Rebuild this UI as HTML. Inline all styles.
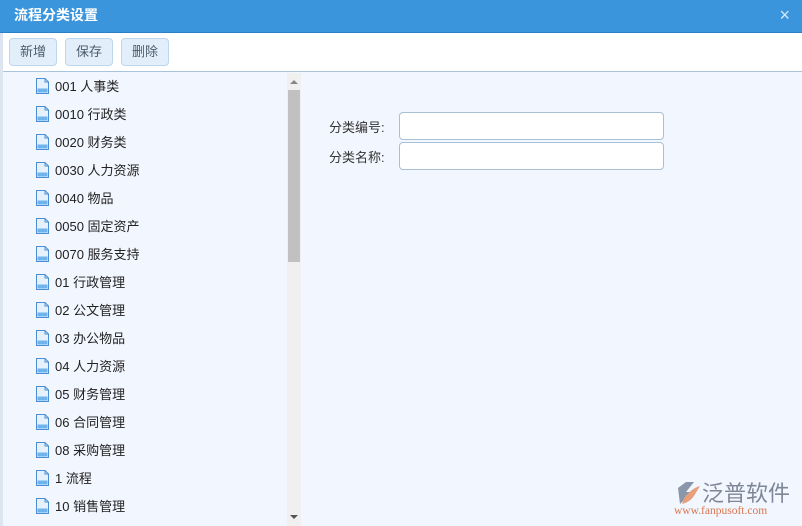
<!DOCTYPE html>
<html><head><meta charset="utf-8"><style>
*{margin:0;padding:0;box-sizing:border-box}
body{width:802px;height:526px;overflow:hidden;background:#f2f6fe;font-family:"Liberation Sans","Noto Sans CJK SC",sans-serif;position:relative}
.hd{position:absolute;left:0;top:0;width:802px;height:33px;background:#3b95dc;border-bottom:1px solid #2a7fc6;color:#fff;font-weight:bold;font-size:14px;line-height:30px;padding-left:14px}
.x{position:absolute;right:12px;top:0;color:#d8e9f8;font-size:18px;font-weight:normal}
.tb{position:absolute;left:3px;top:33px;width:799px;height:39px;background:#fff;border-bottom:1px solid #a8c4dc}
.btn{position:absolute;top:5px;height:28px;width:48px;border:1px solid #bcd6ee;border-radius:4px;background:#e2effb;color:#4d5b6a;font-size:13px;text-align:center;line-height:26px}
.lb{position:absolute;left:0;top:33px;width:3px;height:493px;background:#dde6f0}
.item{position:absolute;left:36px;font-size:13px;color:#222;height:20px;line-height:20px}
.ic{display:inline-block;width:13px;height:16px;vertical-align:-3px;margin-right:6px}
.sb{position:absolute;left:287px;top:73px;width:14px;height:453px;background:#f0f0f0}
.th{position:absolute;left:288px;top:90px;width:12px;height:172px;background:#c1c1c1}
.lab{position:absolute;left:329px;font-size:13px;color:#333}
.in{position:absolute;left:399px;width:265px;height:28px;background:#fff;border:1px solid #a9bfd6;border-radius:4px}
</style></head><body>
<div class="hd">流程分类设置<span class="x">×</span></div>
<div class="lb"></div>
<div class="tb">
<div class="btn" style="left:6px">新增</div>
<div class="btn" style="left:62px">保存</div>
<div class="btn" style="left:118px">删除</div>
</div>
<div id="list"></div>
<div class="sb"><div style="position:absolute;left:3px;top:7px;border:4px solid transparent;border-bottom:4px solid #888;border-top:0"></div><div style="position:absolute;left:3px;bottom:7px;border:4px solid transparent;border-top:4px solid #555;border-bottom:0"></div></div>
<div class="th"></div>
<div class="lab" style="top:117px">分类编号:</div>
<div class="lab" style="top:147px">分类名称:</div>
<div class="in" style="top:112px"></div>
<div class="in" style="top:142px"></div>
<svg style="position:absolute;left:672px;top:478px" width="124" height="40">
<path d="M6 10 L14 4 L22 4 L14 14 L20 14 L8 26 Z" fill="#8a96aa"/>
<path d="M12 20 Q20 10 28 8 L22 18 Q18 24 10 26 Z" fill="#e8a07c"/>
<text x="30" y="23" font-family="Noto Sans CJK SC" font-size="22" fill="#7d8797">泛普软件</text>
<text x="2" y="36" font-family="Liberation Serif" font-size="11.5" fill="#d9774f">www.fanpusoft.com</text>
</svg>
<script>
var t=["001 人事类","0010 行政类","0020 财务类","0030 人力资源","0040 物品","0050 固定资产","0070 服务支持","01 行政管理","02 公文管理","03 办公物品","04 人力资源","05 财务管理","06 合同管理","08 采购管理","1 流程","10 销售管理"];
var h="";
t.forEach(function(s,i){h+='<div class="item" style="top:'+(77+i*28)+'px"><svg class="ic" viewBox="0 0 13 16"><path d="M0.5 0.5H9L12.5 4V15.5H0.5Z" fill="#e6f1fc" stroke="#4a8fd6"/><path d="M9 0.5V4H12.5" fill="none" stroke="#4a8fd6"/><rect x="1.5" y="10.5" width="10" height="4" fill="#6fb2ec"/></svg>'+s+'</div>';});
document.getElementById("list").innerHTML=h;
</script>
</body></html>
